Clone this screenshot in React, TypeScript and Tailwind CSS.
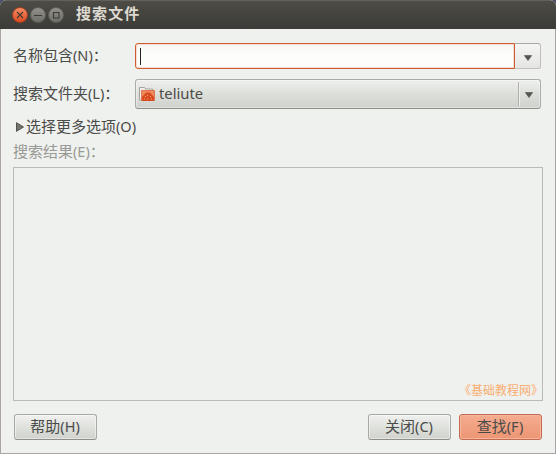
import type { ReactNode } from 'react';

function Caret() {
  return (
    <svg width="8" height="6" viewBox="0 0 8 6">
      <path d="M0.3 0.5h7.4L4 5.6z" fill="#555651" stroke="#44443f" strokeWidth="0.5" />
    </svg>
  );
}

function WindowButton({ close, children }: { close?: boolean; children: ReactNode }) {
  return (
    <div
      className={
        'flex h-4 w-4 items-center justify-center rounded-full border ' +
        (close
          ? 'border-[#9d3f23] bg-linear-to-b from-[#f58a62] to-[#dc4a1d]'
          : 'border-[#5e5e58] bg-linear-to-b from-[#92928b] to-[#6e6e68]')
      }
    >
      <svg className="shrink-0" width="14" height="14" viewBox="0 0 14 14" fill="none" stroke="#3b3a35" strokeWidth="1.1">
        {children}
      </svg>
    </div>
  );
}

function Label({ cjk, latin, colon }: { cjk: string; latin: string; colon?: boolean }) {
  return (
    <span className="flex items-center whitespace-nowrap">
      <span>{cjk}</span>
      <span className="text-[14.5px]">{latin}</span>
      {colon && <span className="w-[15px]">：</span>}
    </span>
  );
}

function Button({ cjk, latin, primary }: { cjk: string; latin: string; primary?: boolean }) {
  return (
    <button
      className={
        'flex h-[26px] w-[83px] items-center justify-center rounded-[3px] border pr-px pb-[2px] ' +
        (primary
          ? 'border-[#c66a4f] bg-linear-to-b from-[#f5ac90] to-[#ec9573] shadow-[inset_0_0_0_1px_#f7b69e]'
          : 'border-[#aaa9a5] border-b-[#8f8e8a] bg-linear-to-b from-[#f0f1ee] to-[#cfd2cd] shadow-[inset_0_0_0_1px_rgba(255,255,255,0.45)]')
      }
    >
      <Label cjk={cjk} latin={latin} />
    </button>
  );
}

export default function App() {
  return (
    <div className="h-[454px] w-[556px] bg-[#4b4c68] font-['Noto_Sans','Noto_Sans_CJK_SC',sans-serif] text-[15px] leading-5 text-[#4b4b49]">
      <div className="flex h-full flex-col overflow-hidden rounded-t-[6px] bg-[#eff1ee]">
        <header className="flex h-[29px] shrink-0 items-center border-t border-[#62625a] bg-linear-to-b from-[#4d4c45] to-[#3b3b37] pl-[12px]">
          <div className="flex gap-[2px]">
            <WindowButton close><path d="M4 4l6 6M10 4l-6 6" /></WindowButton>
            <WindowButton><path d="M3 7.5h8" /></WindowButton>
            <WindowButton><path d="M4.5 4.5h5.5v5.5h-5.5z" /></WindowButton>
          </div>
          <h1 className="ml-[12px] pb-[4px] text-[15px] font-bold tracking-[1.1px] text-[#dfdbd2]">搜索文件</h1>
        </header>

        <main className="flex grow flex-col border-x border-b border-[#aaa5a3] pt-[14px] pr-[12px] pl-[12px]">
          <div className="flex h-[26px] items-center">
            <div className="w-[122px] pb-[2px]"><Label cjk="名称包含" latin="(N)" colon /></div>
            <div className="flex h-[26px] w-[380px] items-center rounded-l-[3px] border border-[#cf5b31] bg-linear-to-b from-[#f5f5f3] to-[#fdfdfc] to-40% pl-1 shadow-[inset_0_0_0_1px_#f6ddd3]">
              <div className="h-[17px] w-px bg-[#222]" />
            </div>
            <div className="flex h-[26px] w-[26px] items-center justify-center rounded-r-[3px] border border-l-0 border-[#c3bfbc] border-t-[#aaa8a5] bg-linear-to-b from-[#f5f5f3] to-[#e5e6e3] pt-[3px]">
              <Caret />
            </div>
          </div>

          <div className="mt-[10px] flex h-[30px] items-center">
            <div className="w-[122px] pb-[2px]"><Label cjk="搜索文件夹" latin="(L)" colon /></div>
            <div className="flex h-[30px] w-[406px] items-center rounded-[3px] border border-[#acaca7] border-b-[#8e8e89] bg-linear-to-b from-[#eff0ed] via-[#dcdfda] to-[#cfd2cc] pl-[3px] shadow-[inset_0_0_0_1px_rgba(255,255,255,0.4)]">
              <svg width="17" height="16" viewBox="0 0 17 16">
                <path d="M0.5 14V1.5h5l1 1.5h7v11z" fill="#f2eeea" stroke="#a5a29d" />
                <path d="M2.5 4.5h13v10h-13z" fill="#ee8a60" stroke="#e07350" />
                <path d="M3 11L7 6.5h4l4 4.5v4H3z" fill="#d84b1e" />
                <path d="M6 10.5h1m4 0h1M8 9.5h1M5 13h1m2 0h1m3 0h1" stroke="#f3a27c" />
              </svg>
              <span className="ml-[3px] grow pb-[2px] text-[14.8px]">teliute</span>
              <div className="flex h-6 w-[22px] items-center justify-center border-l border-[#aeb0ab] pt-[2px] pr-[2px] shadow-[inset_1px_0_0_#eff0ee]">
                <Caret />
              </div>
            </div>
          </div>

          <div className="mt-[8px] flex h-5 items-center pl-[3px]">
            <svg width="8" height="10" viewBox="0 0 8 10">
              <path d="M0.5 0.7v8.6L7.5 5z" fill="#74746f" stroke="#50504c" />
            </svg>
            <span className="ml-[2px] pb-[2px]"><Label cjk="选择更多选项" latin="(O)" /></span>
          </div>
          <div className="mt-[4px] h-5 text-[#999995]"><Label cjk="搜索结果" latin="(E)" colon /></div>

          <section className="mt-[6px] flex h-[234px] w-[530px] shrink-0 items-end justify-end border border-[#bcbab7]">
            <span className="mr-[-2px] mb-px w-[85px] whitespace-nowrap text-[12px] leading-4 text-[#f9ad70]">《基础教程网》</span>
          </section>

          <footer className="mt-[13px] flex pr-px pl-px">
            <Button cjk="帮助" latin="(H)" />
            <div className="ml-auto flex gap-2">
              <Button cjk="关闭" latin="(C)" />
              <Button cjk="查找" latin="(F)" primary />
            </div>
          </footer>
        </main>
      </div>
    </div>
  );
}
